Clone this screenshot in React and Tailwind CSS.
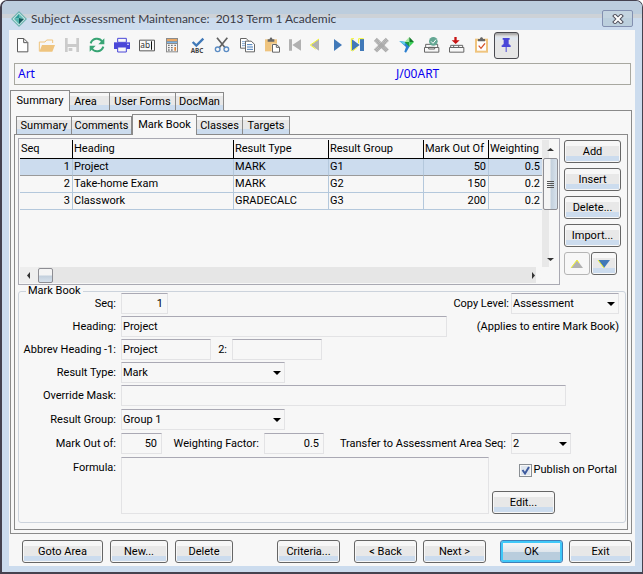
import React, { useState } from 'react';
import clsx from 'clsx';

const TOOLBAR = [
    {
        label: 'New',
        art: <path d="M13.5 7.5h19l12 12v28h-31zM32 8v12h12" fill="#fff" stroke="#5a5a5a" strokeWidth="3" />,
    },
    {
        label: 'Open',
        art: (
            <>
                <path d="M4 46V18h17l5-6h18v9" fill="none" stroke="#efc47e" strokeWidth="3" />
                <path d="M4 47L12 27H51L43 47z" fill="#efc47e" />
            </>
        ),
    },
    {
        label: 'Save',
        art: (
            <>
                <path d="M6 6h42v42H6z" fill="#cbcbcb" />
                <path d="M14 6h26v18H14zM14 33h26v15H14z" fill="#f7f7f7" />
                <path d="M17 36h11v9H17z" fill="#cbcbcb" />
            </>
        ),
    },
    {
        label: 'Refresh',
        art: (
            <>
                <path d="M8 22C13 6 34 3 43 17M46 32C41 48 20 51 11 37" fill="none" stroke="#38a474" strokeWidth="6" />
                <path d="M49 7v18H31zM5 47V29h18z" fill="#38a474" />
            </>
        ),
    },
    {
        label: 'Print',
        art: (
            <>
                <path d="M3 19h48v20H3z" fill="#4a47d8" />
                <path d="M14 7h26v12H14z" fill="#f7f7f7" stroke="#4a47d8" strokeWidth="3" />
                <path d="M14 33h26v15H14z" fill="#f7f7f7" stroke="#4a47d8" strokeWidth="3" />
                <path d="M43 23h4v4h-4z" fill="#fff" />
            </>
        ),
    },
    {
        label: 'Text field',
        art: (
            <>
                <path d="M4.500 12.500h45v32h-45z" fill="#fafafa" stroke="#5a5a5a" strokeWidth="3" />
                <text x="7" y="37" fontSize="25" fill="#333" fontFamily="Noto Sans, sans-serif">ab</text>
                <path d="M39 16h3v25h-3z" fill="#111" />
            </>
        ),
    },
    {
        label: 'Calculator',
        art: (
            <>
                <path d="M9 6h36v43H9z" fill="#8b8b8b" />
                <path d="M12 9h30v6H12z" fill="#e8a765" />
                <path d="M12 17h30v4H12z" fill="#7db4e4" />
                <path d="M12 24h30v22H12z" fill="#f4f4f4" />
                <path d="M15 26h5v4h-5zM24 26h5v4h-5zM34 26h5v4h-5zM15 33h5v4h-5zM24 33h5v4h-5zM15 40h5v4h-5zM24 40h5v4h-5z" fill="#777" />
                <path d="M34 33h5v11h-5z" fill="#e0883c" />
            </>
        ),
    },
    {
        label: 'Spelling',
        art: (
            <>
                <path d="M14 18l11 11L46 8" fill="none" stroke="#4179b8" strokeWidth="7" />
                <text x="8" y="51" fontSize="19" fontWeight="700" fill="#444" fontFamily="Noto Sans, sans-serif">ABC</text>
            </>
        ),
    },
    {
        label: 'Cut',
        art: (
            <>
                <path d="M12 5l25 31M43 5L18 36" stroke="#606060" strokeWidth="5" />
                <circle cx="14" cy="40" r="7" fill="none" stroke="#5b8cc4" strokeWidth="4" />
                <circle cx="40" cy="40" r="7" fill="none" stroke="#5b8cc4" strokeWidth="4" />
            </>
        ),
    },
    {
        label: 'Copy',
        art: (
            <>
                <path d="M7.500 7.500h17l8 8v21h-25z" fill="#fff" stroke="#666" strokeWidth="3" />
                <path d="M12 17h12M12 23h12M12 29h12" stroke="#4179b8" strokeWidth="2" />
                <path d="M22.500 15.500h17l10 9v23h-27z" fill="#fff" stroke="#666" strokeWidth="3" />
                <path d="M27 26h16M27 33h18M27 40h18" stroke="#4179b8" strokeWidth="3" />
            </>
        ),
    },
    {
        label: 'Paste',
        art: (
            <>
                <path d="M6 10h36v36H6z" fill="#efc47e" />
                <path d="M14 10h6c0-7 8-7 8 0h6v7H14z" fill="#666" />
                <path d="M26 23h15l10 9v19H26z" fill="#f7f7f7" />
                <path d="M28.500 25.500h12l9 8v15h-21zM40 26v8h9" fill="#fff" stroke="#666" strokeWidth="3" />
            </>
        ),
    },
    {
        label: 'First record',
        narrow: true,
        art: <path d="M9 10h9v34H9zM45 10v34L19 27z" fill="#b1b1b1" />,
    },
    {
        label: 'Previous record',
        narrow: true,
        art: (
            <>
                <path d="M36 9v35L12 27z" fill="#b1b1b1" />
                <path d="M36 9L10 27l16 12" fill="none" stroke="#f5f52a" strokeWidth="3" />
            </>
        ),
    },
    {
        label: 'Next record',
        narrow: true,
        art: <path d="M18 9v36l24-18z" fill="#4179b8" />,
    },
    {
        label: 'Last record',
        narrow: true,
        art: (
            <>
                <path d="M8 9v36l24-18zM33 9h12v36H33z" fill="#4179b8" />
                <path d="M7 45V8h8M29 22V8h15M25 34L11 45" fill="none" stroke="#f5f52a" strokeWidth="3" />
            </>
        ),
    },
    {
        label: 'Remove',
        art: <path d="M10 10l36 35M46 10L10 45" stroke="#aaa" strokeWidth="13" strokeDasharray="4 0.500" />,
    },
    {
        label: 'Go to',
        art: (
            <>
                <path d="M7 15l20 3 12 11-12 21-5-3 5-14z" fill="#2b7fd0" />
                <path d="M7 15l20 3-5 9z" fill="#5fd0e8" />
                <path d="M37 3L23 18h14z" fill="#a5e8a0" />
                <path d="M37 3l14 15H37z" fill="#157a2c" />
                <path d="M23 18h14v14z" fill="#1c9a3c" />
                <path d="M37 18h14L37 32z" fill="#3ccf58" />
            </>
        ),
    },
    {
        label: 'Check in',
        art: (
            <>
                <path d="M7.500 34.500h43v14h-43zM11 34v-9h36v9M20 34h18v5H20z" fill="none" stroke="#666" strokeWidth="3" />
                <circle cx="34" cy="16" r="13" fill="#64a794" />
                <path d="M27 16l6 6 9-11" fill="none" stroke="#fff" strokeWidth="3" />
            </>
        ),
    },
    {
        label: 'Download',
        art: (
            <>
                <path d="M7.500 34.500h43v14h-43zM11 34v-6h36v6M20 34v-6M35 34v-6" fill="none" stroke="#666" strokeWidth="3" />
                <path d="M22 3h7v10h9L26 24 14 13h8z" fill="#c81414" />
            </>
        ),
    },
    {
        label: 'Tasks',
        art: (
            <>
                <path d="M9 8h39v42H9z" fill="#efc47e" />
                <path d="M15 15h27v29H15z" fill="#fff" />
                <path d="M18 9h6c0-7 9-7 9 0h6v7H18z" fill="#666" />
                <path d="M20 29l7 8 12-15" fill="none" stroke="#d4532c" strokeWidth="4" />
            </>
        ),
    },
];

const ROWS = [
    { seq: 1, heading: 'Project', type: 'MARK', group: 'G1', outOf: '50', weight: '0.5' },
    { seq: 2, heading: 'Take-home Exam', type: 'MARK', group: 'G2', outOf: '150', weight: '0.2' },
    { seq: 3, heading: 'Classwork', type: 'GRADECALC', group: 'G3', outOf: '200', weight: '0.2' },
];

const FIELD = 'h-[21px] border border-[#e3e3e5] border-t-[#aaa9b4] bg-[#f7f7f7] px-px outline-none';

const Btn = ({ className, primary, muted, children, ...rest }) => (
    <button
        type="button"
        className={clsx(
            'h-[23px] shrink-0 rounded-[3px] border',
            primary ? 'border-[#3f7fb8] p-[2px] ring-2 ring-inset ring-[#3fc8f8]' : 'p-px',
            !primary && (muted ? 'border-[#b5b5b5]' : 'border-[#666]'),
            className
        )}
        {...rest}
    >
        <span
            className={clsx(
                'flex h-full items-center justify-center whitespace-nowrap',
                primary && 'bg-[linear-gradient(#f3f5f7_0%,#dfe6ec_50%,#b9cddd_50%)]',
                !primary && !muted && 'bg-[linear-gradient(#f7f7f7_0_22%,#e8e8e8_22%_72%,#ccdcee_72%)]'
            )}
        >
            {children}
        </span>
    </button>
);

const TabStrip = ({ tabs, active, onPick, className }) => (
    <div role="tablist" className={clsx('relative flex h-[20px] items-end', className)}>
        {tabs.map(({ name, width }) => (
            <button
                key={name}
                type="button"
                role="tab"
                aria-selected={name === active}
                onClick={() => onPick(name)}
                className={clsx(
                    'border border-b-0 border-[#8a8a8a] whitespace-nowrap',
                    width,
                    name === active
                        ? '-mb-px h-[21px] bg-[#f7f7f7]'
                        : 'h-[18px] bg-[linear-gradient(#f7f7f7_0_20%,#e8e8e8_20%_72%,#ccdcee_72%)] not-first:border-l-0'
                )}
            >
                {name}
            </button>
        ))}
    </div>
);

const Row = ({ label, id, children, className }) => (
    <div className={clsx('flex items-center gap-[5px]', className)}>
        <label htmlFor={id} className="w-[97px] shrink-0 text-right whitespace-nowrap">{label}</label>
        {children}
    </div>
);

const Select = ({ id, width, value }) => (
    <div className={clsx('relative shrink-0', width)}>
        <select id={id} defaultValue={value} className={clsx(FIELD, 'w-full appearance-none')}>
            <option>{value}</option>
        </select>
        <svg viewBox="0 0 8 4" className="pointer-events-none absolute top-[9px] right-[4px] h-1 w-2">
            <path d="M0 0h8L4 4z" fill="#000" />
        </svg>
    </div>
);

const Arrow = ({ d, className }) => (
    <svg viewBox="0 0 7 7" className={clsx('size-[7px]', className)}>
        <path d={d} fill="#333" />
    </svg>
);

const App = () => {
    const [tab, setTab] = useState('Summary');
    const [subTab, setSubTab] = useState('Mark Book');

    return (
        <div className="rounded-t-[7px] border-t border-r border-b-2 border-l-2 border-[#45424f] bg-[#ccdcee] px-[7px] pb-[6px] font-[Roboto,sans-serif] text-[11px] leading-[14px] text-black">
            <header className="-mx-[7px] flex h-[29px] items-center rounded-t-[6px] bg-[linear-gradient(#bccddd_0_13px,#cdd2d7_13px_17px,#ccdcee_17px)] px-[9px] pt-[6px]">
                <svg viewBox="0 0 48 48" className="mr-[4px] size-4">
                    <path d="M24 0l24 24-24 24L0 24z" fill="#6fb3b0" />
                    <path d="M24 5l19 19-19 19L5 24z" fill="#d5eeec" />
                    <path d="M24 8L9 24l15-3z" fill="#2d9a96" />
                    <path d="M24 8l15 16-15-3z" fill="#5fbcb4" />
                    <path d="M9 24l15-3v19z" fill="#56b5ae" />
                    <path d="M24 21l15 3-15 16z" fill="#155a5c" />
                </svg>
                <h1 className="text-[12px] leading-[18px] whitespace-pre text-[#3a3a44] font-[Lato,sans-serif]">
                    {'Subject Assessment Maintenance:  2013 Term 1 Academic'}
                </h1>
                <button
                    type="button"
                    aria-label="Close"
                    className="ml-auto flex h-[17px] w-[31px] items-center justify-center rounded-[2px] border border-[#8390b0] bg-[linear-gradient(#c4d4e0_0_50%,#bccfdd_50%)]"
                >
                    <svg viewBox="0 0 12 10" className="h-[10px] w-3">
                        <path d="M3 2l6 6M9 2L3 8" stroke="#50505c" strokeWidth="4" strokeLinecap="square" />
                        <path d="M3 2l6 6M9 2L3 8" stroke="#fff" strokeWidth="2" strokeLinecap="square" />
                    </svg>
                </button>
            </header>

            <main className="bg-[#f7f7f7]">
                <div className="flex h-[30px] items-center pl-px">
                    {TOOLBAR.map(({ label, narrow, art }) => (
                        <button
                            key={label}
                            type="button"
                            aria-label={label}
                            className={clsx('flex shrink-0 justify-center', narrow ? 'w-[21px]' : 'w-[25px]')}
                        >
                            <svg viewBox="0 0 57 54" className="h-[18px] w-[19px]">{art}</svg>
                        </button>
                    ))}
                    <button
                        type="button"
                        aria-label="Pin"
                        aria-pressed="true"
                        className="flex h-[27px] w-[25px] shrink-0 items-center justify-center rounded-[3px] border border-[#4a4a50] bg-[linear-gradient(#a9a9a9_0_1px,#dcdcdc_3px,#dfe8f2_5px,#e6e6e6_9px)]"
                    >
                        <svg viewBox="0 0 57 54" className="h-[18px] w-[19px] shrink-0">
                            <path d="M17 6h21v5h-3v14h3v3h3v5H14v-5h3v-3h3V11h-3z" fill="#4a47d8" />
                            <path d="M26 33h3v15h-3z" fill="#4a47d8" />
                        </svg>
                    </button>
                </div>

                <div className="mt-[3px] mr-1 ml-[5px] flex h-[22px] items-center border border-[#a8a8a0] text-[12px] text-[#0a00f0] font-['Noto_Sans',sans-serif]">
                    <span className="w-[378px] pl-[3px]">Art</span>
                    <span className="pl-[3px]">J/00ART</span>
                </div>

                <div className="mt-[5px] mr-[3px] ml-px">
                    <TabStrip
                        active={tab}
                        onPick={setTab}
                        tabs={[
                            { name: 'Summary', width: 'w-[60px]' },
                            { name: 'Area', width: 'w-[40px] pr-2' },
                            { name: 'User Forms', width: 'w-[66px]' },
                            { name: 'DocMan', width: 'w-[48px]' },
                        ]}
                    />
                    <div className="border border-[#8a8a8a] p-[3px]">
                        <TabStrip
                            className="pl-[2px]"
                            active={subTab}
                            onPick={setSubTab}
                            tabs={[
                                { name: 'Summary', width: 'w-[56px]' },
                                { name: 'Comments', width: 'w-[60px]' },
                                { name: 'Mark Book', width: 'w-[65px]' },
                                { name: 'Classes', width: 'w-[46px]' },
                                { name: 'Targets', width: 'w-[47px]' },
                            ]}
                        />
                        <div className="border border-[#8a8a8a] pt-[3px] pr-px pb-[6px] pl-[3px]">
                            <div className="mr-[5px] flex gap-1">
                                <div className="min-w-0 flex-1 border border-[#a9a9b2] p-px">
                                    <div className="flex h-[127px]">
                                        <div className="min-w-0 flex-1">
                                            <table className="w-full table-fixed border-separate border-spacing-0">
                                                <thead>
                                                    <tr className="h-[19px] text-left *:border-b *:border-black *:p-0 *:pl-px *:font-normal *:whitespace-nowrap *:not-last:border-r">
                                                        <th className="w-[53px]">Seq</th>
                                                        <th>Heading</th>
                                                        <th className="w-[95px]">Result Type</th>
                                                        <th className="w-[95px]">Result Group</th>
                                                        <th className="w-[65px]">Mark Out Of</th>
                                                        <th className="w-[53px]">Weighting</th>
                                                    </tr>
                                                </thead>
                                                <tbody>
                                                    {ROWS.map((r, i) => (
                                                        <tr
                                                            key={r.seq}
                                                            className={clsx(
                                                                'h-[17px] *:border-b *:p-0 *:pr-[2px] *:pl-px *:not-last:border-r *:border-r-[#b4c8dc]',
                                                                i === 0 ? 'bg-[#ccdcee] *:border-b-[#9a9a9a]' : '*:border-b-[#b4c8dc]'
                                                            )}
                                                        >
                                                            <td className="text-right">{r.seq}</td>
                                                            <td>{r.heading}</td>
                                                            <td>{r.type}</td>
                                                            <td>{r.group}</td>
                                                            <td className="text-right">{r.outOf}</td>
                                                            <td className="text-right">{r.weight}</td>
                                                        </tr>
                                                    ))}
                                                </tbody>
                                            </table>
                                        </div>
                                        <div className="flex w-4 flex-col items-center bg-[linear-gradient(90deg,#e8e8e8_0_7px,#f7f7f7_7px)]">
                                            <div className="flex h-[18px] items-center">
                                                <Arrow d="M3.500 2L7 5H0z" />
                                            </div>
                                            <div className="flex h-[52px] w-[15px] flex-col items-center justify-center gap-px rounded-[2px] border border-[#8d8d93] bg-[linear-gradient(90deg,#f4f4f4_0_45%,#c3d0dd_55%,#d8e2ec)]">
                                                <i className="h-px w-[7px] bg-[#555]" />
                                                <i className="h-px w-[7px] bg-[#555]" />
                                                <i className="h-px w-[7px] bg-[#555]" />
                                                <i className="h-px w-[7px] bg-[#555]" />
                                            </div>
                                            <div className="mt-auto flex h-4 items-center">
                                                <Arrow d="M3.500 5L7 2H0z" />
                                            </div>
                                        </div>
                                    </div>
                                    <div className="mr-4 flex h-4 items-center bg-[#e6e6e6]">
                                        <div className="flex h-full w-[18px] items-center bg-[#eee] pl-[5px]">
                                            <Arrow d="M5 0v7L2 3.500z" />
                                        </div>
                                        <div className="h-[15px] w-[15px] rounded-[2px] border border-[#8d8d93] bg-[linear-gradient(#f4f4f4_0_45%,#c3d0dd_55%,#d8e2ec)]" />
                                        <div className="ml-auto flex h-full w-3 items-center bg-linear-to-r from-[#e6e6e6] from-50% to-[#f7f7f7] to-50%">
                                            <Arrow d="M2 0v7l3-3.500z" />
                                        </div>
                                    </div>
                                </div>

                                <div className="flex w-[57px] flex-col gap-[5px] pt-[2px]">
                                    <Btn>Add</Btn>
                                    <Btn>Insert</Btn>
                                    <Btn>Delete...</Btn>
                                    <Btn>Import...</Btn>
                                    <div className="flex gap-px">
                                        <Btn muted className="w-[26px]" aria-label="Move up">
                                            <svg viewBox="0 0 14 10" className="h-[10px] w-[14px]">
                                                <path d="M7 1l6 8H1z" fill="#b1b1b1" />
                                                <path d="M1 9l6-8 2 3" fill="none" stroke="#f5f52a" />
                                            </svg>
                                        </Btn>
                                        <Btn className="w-[26px]" aria-label="Move down">
                                            <svg viewBox="0 0 14 10" className="h-[10px] w-[14px]">
                                                <path d="M1 1h12L7 9z" fill="#4179b8" />
                                                <path d="M1 1l6 8" fill="none" stroke="#f5f52a" />
                                            </svg>
                                        </Btn>
                                    </div>
                                </div>
                            </div>

                            <fieldset className="mt-1 rounded-[3px] border border-[#ccd3dc] pb-2">
                                <legend className="ml-[7px] h-1 px-[2px] leading-1">Mark Book</legend>
                                <div className="flex flex-col gap-[2px]">
                                    <Row label="Seq:" id="seq">
                                        <input id="seq" defaultValue="1" className={clsx(FIELD, 'w-[47px] pr-1 text-right')} />
                                        <div className="mr-[6px] ml-auto flex items-center gap-[2px]">
                                            <label htmlFor="copy">Copy Level:</label>
                                            <Select id="copy" width="w-[108px]" value="Assessment" />
                                        </div>
                                    </Row>
                                    <Row label="Heading:" id="heading">
                                        <input id="heading" defaultValue="Project" className={clsx(FIELD, 'w-[326px]')} />
                                        <span className="mr-[6px] ml-auto">(Applies to entire Mark Book)</span>
                                    </Row>
                                    <Row label="Abbrev Heading -1:" id="abbrev1">
                                        <input id="abbrev1" defaultValue="Project" className={clsx(FIELD, 'w-[90px]')} />
                                        <label htmlFor="abbrev2" className="w-[11px] text-right">2:</label>
                                        <input id="abbrev2" className={clsx(FIELD, 'w-[90px]')} />
                                    </Row>
                                    <Row label="Result Type:" id="resultType">
                                        <Select id="resultType" width="w-[164px]" value="Mark" />
                                    </Row>
                                    <Row label="Override Mask:" id="mask">
                                        <input id="mask" className={clsx(FIELD, 'w-[445px]')} />
                                    </Row>
                                </div>
                                <div className="mt-[3px] flex flex-col gap-[3px]">
                                    <Row label="Result Group:" id="resultGroup">
                                        <Select id="resultGroup" width="w-[164px]" value="Group 1" />
                                    </Row>
                                    <Row label="Mark Out of:" id="outOf">
                                        <input id="outOf" defaultValue="50" className={clsx(FIELD, 'w-[41px] pr-1 text-right')} />
                                        <label htmlFor="factor" className="w-[92px] text-right whitespace-nowrap">Weighting Factor:</label>
                                        <input id="factor" defaultValue="0.5" className={clsx(FIELD, 'w-[60px] pr-1 text-right')} />
                                        <label htmlFor="transfer" className="w-[177px] text-right whitespace-nowrap">Transfer to Assessment Area Seq:</label>
                                        <Select id="transfer" width="w-[60px]" value="2" />
                                    </Row>
                                    <div className="flex gap-[5px]">
                                        <label htmlFor="formula" className="w-[97px] pt-1 text-right">Formula:</label>
                                        <textarea id="formula" className={clsx(FIELD, 'h-[57px] min-w-0 flex-1 resize-none')} />
                                        <div className="-ml-[2px] flex w-[133px] flex-col justify-between pt-[6px]">
                                            <label className="ml-auto flex items-center gap-[2px] pr-2">
                                                <span className="relative flex">
                                                    <input
                                                        type="checkbox"
                                                        defaultChecked
                                                        className="peer size-[13px] appearance-none border border-[#8a8f94] bg-[#dfe6ee] shadow-[inset_0_0_0_1px_#f7f7f7]"
                                                    />
                                                    <svg viewBox="0 0 13 13" className="pointer-events-none absolute inset-0 hidden peer-checked:block">
                                                        <path d="M3.500 6l2.500 3.500L10 3" fill="none" stroke="#3d5a9e" strokeWidth="2" />
                                                    </svg>
                                                </span>
                                                Publish on Portal
                                            </label>
                                            <Btn className="w-[63px]">Edit...</Btn>
                                        </div>
                                    </div>
                                </div>
                            </fieldset>
                        </div>
                    </div>
                </div>

                <footer className="flex pt-[6px] pr-[3px] pb-[3px] pl-[13px]">
                    <div className="flex gap-[7px]">
                        <Btn className="w-[81px]">Goto Area</Btn>
                        <Btn className="w-[58px]">New...</Btn>
                        <Btn className="w-[58px]">Delete</Btn>
                    </div>
                    <div className="ml-auto flex gap-[14px]">
                        <Btn className="w-[63px]">Criteria...</Btn>
                        <div className="flex gap-[6px]">
                            <Btn className="w-[63px]">&lt; Back</Btn>
                            <Btn className="w-[63px]">Next &gt;</Btn>
                        </div>
                        <div className="flex gap-[6px]">
                            <Btn primary className="w-[63px]">OK</Btn>
                            <Btn className="w-[63px]">Exit</Btn>
                        </div>
                    </div>
                </footer>
            </main>
        </div>
    );
};

export default App;
